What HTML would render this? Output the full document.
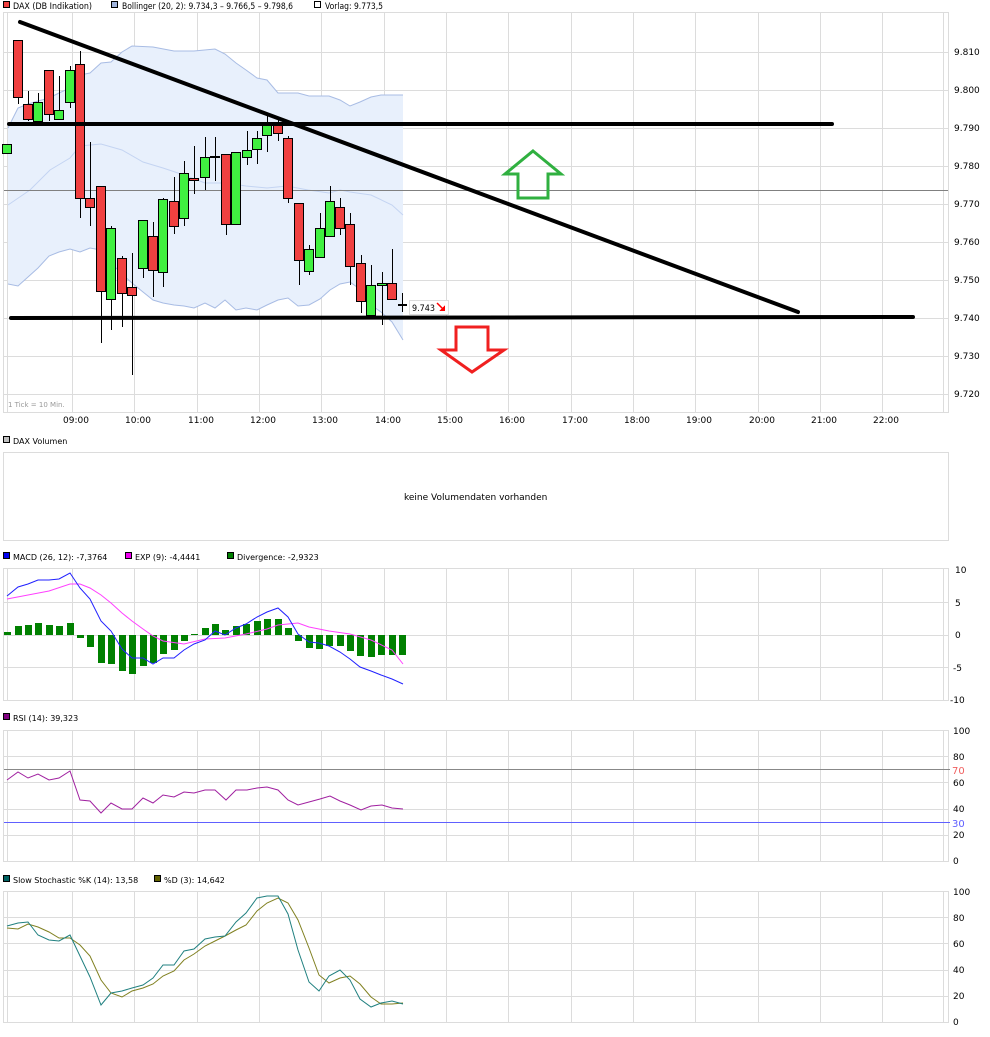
<!DOCTYPE html>
<html><head><meta charset="utf-8"><style>
body{margin:0;background:#fff;width:990px;height:1033px;overflow:hidden;font-family:"DejaVu Sans","Liberation Sans",sans-serif;}
svg text{font-family:"DejaVu Sans","Liberation Sans",sans-serif;font-size:9px;fill:#000;}
</style></head><body>
<svg width="990" height="1033" viewBox="0 0 990 1033" xmlns="http://www.w3.org/2000/svg" shape-rendering="crispEdges">
<!-- legend top -->
<rect x="3.5" y="1.5" width="6" height="6" fill="#f04040" stroke="#000"/>
<text x="13" y="9" textLength="79" lengthAdjust="spacingAndGlyphs">DAX (DB Indikation)</text>
<rect x="111.5" y="1.5" width="6" height="6" fill="#a0b4dc" stroke="#000"/>
<text x="122" y="9" textLength="171" lengthAdjust="spacingAndGlyphs">Bollinger (20, 2): 9.734,3 – 9.766,5 – 9.798,6</text>
<rect x="314.5" y="1.5" width="6" height="6" fill="#fff" stroke="#000"/>
<text x="325" y="9" textLength="58" lengthAdjust="spacingAndGlyphs">Vorlag: 9.773,5</text>

<!-- main panel -->
<g stroke="#dcdcdc" stroke-width="1">
<rect x="3.5" y="12.5" width="945" height="400" fill="none"/>
<line x1="7.5" y1="13" x2="7.5" y2="412"/><line x1="943.5" y1="13" x2="943.5" y2="412"/>
<line x1="72.5" y1="13" x2="72.5" y2="412"/><line x1="134.5" y1="13" x2="134.5" y2="412"/><line x1="197.5" y1="13" x2="197.5" y2="412"/><line x1="259.5" y1="13" x2="259.5" y2="412"/><line x1="321.5" y1="13" x2="321.5" y2="412"/><line x1="384.5" y1="13" x2="384.5" y2="412"/><line x1="446.5" y1="13" x2="446.5" y2="412"/><line x1="508.5" y1="13" x2="508.5" y2="412"/><line x1="571.5" y1="13" x2="571.5" y2="412"/><line x1="633.5" y1="13" x2="633.5" y2="412"/><line x1="695.5" y1="13" x2="695.5" y2="412"/><line x1="758.5" y1="13" x2="758.5" y2="412"/><line x1="820.5" y1="13" x2="820.5" y2="412"/><line x1="882.5" y1="13" x2="882.5" y2="412"/>
<line x1="4" y1="52.5" x2="948" y2="52.5"/><line x1="4" y1="90.5" x2="948" y2="90.5"/><line x1="4" y1="128.5" x2="948" y2="128.5"/><line x1="4" y1="166.5" x2="948" y2="166.5"/><line x1="4" y1="204.5" x2="948" y2="204.5"/><line x1="4" y1="242.5" x2="948" y2="242.5"/><line x1="4" y1="280.5" x2="948" y2="280.5"/><line x1="4" y1="318.5" x2="948" y2="318.5"/><line x1="4" y1="356.5" x2="948" y2="356.5"/><line x1="4" y1="394.5" x2="948" y2="394.5"/>
</g>
<g shape-rendering="auto">
<polygon fill="#e8f0fc" points="8,128 18,108 28,104 38,101 49,98 59,93 70,88 80,75 90,73 101,63 111,62 122,52 132,46 153,47 174,51 194,51 215,49 225,54 236,63 246,70 257,78 267,80 278,93 298,93 309,96 329,96 340,100 350,106 360,102 371,97 381,95 403,95 403,340 392,322 381,312 371,305 361,290 350,282 340,284 330,290 320,299 309,305 298,306 288,298 278,300 267,305 257,310 246,308 236,310 225,300 215,308 205,303 194,308 184,306 174,305 163,303 153,300 143,292 132,283 122,274 111,263 101,250 90,248 80,252 70,249 59,252 49,256 38,268 28,277 18,286 8,284"/>
<polyline fill="none" stroke="#a8bce4" points="8,128 18,108 28,104 38,101 49,98 59,93 70,88 80,75 90,73 101,63 111,62 122,52 132,46 153,47 174,51 194,51 215,49 225,54 236,63 246,70 257,78 267,80 278,93 298,93 309,96 329,96 340,100 350,106 360,102 371,97 381,95 403,95"/>
<polyline fill="none" stroke="#a8bce4" points="8,284 18,286 28,277 38,268 49,256 59,252 70,249 80,252 90,248 101,250 111,263 122,274 132,283 143,292 153,300 163,303 174,305 184,306 194,308 205,303 215,308 225,300 236,310 246,308 257,310 267,305 278,300 288,298 298,306 309,305 320,299 330,290 340,284 350,282 361,290 371,305 381,312 392,322 403,340"/>
<polyline fill="none" stroke="#c4d4f2" points="8,205 30,190 50,170 70,158 80,146 101,144 122,150 143,162 163,168 184,175 205,183 226,183 246,186 267,188 287,186 308,190 329,193 340,190 350,192 371,195 392,205 403,215"/>
</g>
<line x1="4" y1="190.5" x2="948" y2="190.5" stroke="#808080"/>

<!-- candles -->
<g stroke="#000" stroke-width="1">
<rect x="2.5" y="144.5" width="9" height="9" fill="#40f040"/>
<line x1="18.5" y1="97" x2="18.5" y2="104"/><rect x="13.5" y="40.5" width="9" height="57" fill="#f04040"/>
<line x1="28.5" y1="91" x2="28.5" y2="121"/><rect x="23.5" y="104.5" width="9" height="15" fill="#f04040"/>
<line x1="38.5" y1="93" x2="38.5" y2="121"/><rect x="33.5" y="102.5" width="9" height="19" fill="#40f040"/>
<line x1="49.5" y1="70" x2="49.5" y2="121"/><rect x="44.5" y="70.5" width="9" height="44" fill="#f04040"/>
<line x1="59.5" y1="76" x2="59.5" y2="119"/><rect x="54.5" y="110.5" width="9" height="9" fill="#40f040"/>
<line x1="70.5" y1="66" x2="70.5" y2="108"/><rect x="65.5" y="70.5" width="9" height="32" fill="#40f040"/>
<line x1="80.5" y1="51" x2="80.5" y2="218"/><rect x="75.5" y="64.5" width="9" height="134" fill="#f04040"/>
<line x1="90.5" y1="142" x2="90.5" y2="226"/><rect x="85.5" y="198.5" width="9" height="9" fill="#f04040"/>
<line x1="101.5" y1="186" x2="101.5" y2="343"/><rect x="96.5" y="186.5" width="9" height="105" fill="#f04040"/>
<line x1="111.5" y1="226" x2="111.5" y2="330"/><rect x="106.5" y="228.5" width="9" height="71" fill="#40f040"/>
<line x1="122.5" y1="256" x2="122.5" y2="327"/><rect x="117.5" y="258.5" width="9" height="35" fill="#f04040"/>
<line x1="132.5" y1="253" x2="132.5" y2="375"/><rect x="127.5" y="287.5" width="9" height="8" fill="#f04040"/>
<line x1="143.5" y1="220" x2="143.5" y2="278"/><rect x="138.5" y="220.5" width="9" height="48" fill="#40f040"/>
<line x1="153.5" y1="222" x2="153.5" y2="297"/><rect x="148.5" y="236.5" width="9" height="34" fill="#f04040"/>
<line x1="163.5" y1="198" x2="163.5" y2="287"/><rect x="158.5" y="199.5" width="9" height="73" fill="#40f040"/>
<line x1="174.5" y1="177" x2="174.5" y2="234"/><rect x="169.5" y="201.5" width="9" height="25" fill="#f04040"/>
<line x1="184.5" y1="161" x2="184.5" y2="226"/><rect x="179.5" y="173.5" width="9" height="45" fill="#40f040"/>
<line x1="194.5" y1="146" x2="194.5" y2="194"/><rect x="189.5" y="178.5" width="9" height="2" fill="#f04040"/>
<line x1="205.5" y1="137" x2="205.5" y2="190"/><rect x="200.5" y="157.5" width="9" height="20" fill="#40f040"/>
<line x1="215.5" y1="137" x2="215.5" y2="181"/><rect x="210.5" y="156.5" width="9" height="1" fill="#40f040"/>
<line x1="226.5" y1="154" x2="226.5" y2="235"/><rect x="221.5" y="154.5" width="9" height="70" fill="#f04040"/>
<line x1="236.5" y1="152" x2="236.5" y2="224"/><rect x="231.5" y="152.5" width="9" height="72" fill="#40f040"/>
<line x1="247.5" y1="131" x2="247.5" y2="165"/><rect x="242.5" y="150.5" width="9" height="7" fill="#40f040"/>
<line x1="257.5" y1="131" x2="257.5" y2="164"/><rect x="252.5" y="138.5" width="9" height="11" fill="#40f040"/>
<line x1="267.5" y1="113" x2="267.5" y2="152"/><rect x="262.5" y="124.5" width="9" height="11" fill="#40f040"/>
<line x1="278.5" y1="118" x2="278.5" y2="141"/><rect x="273.5" y="124.5" width="9" height="9" fill="#f04040"/>
<line x1="288.5" y1="136" x2="288.5" y2="203"/><rect x="283.5" y="138.5" width="9" height="60" fill="#f04040"/>
<line x1="299.5" y1="203" x2="299.5" y2="285"/><rect x="294.5" y="203.5" width="9" height="57" fill="#f04040"/>
<line x1="309.5" y1="245" x2="309.5" y2="275"/><rect x="304.5" y="249.5" width="9" height="22" fill="#40f040"/>
<line x1="320.5" y1="213" x2="320.5" y2="257"/><rect x="315.5" y="228.5" width="9" height="29" fill="#40f040"/>
<line x1="330.5" y1="186" x2="330.5" y2="236"/><rect x="325.5" y="201.5" width="9" height="35" fill="#40f040"/>
<line x1="340.5" y1="198" x2="340.5" y2="235"/><rect x="335.5" y="207.5" width="9" height="21" fill="#f04040"/>
<line x1="350.5" y1="213" x2="350.5" y2="285"/><rect x="345.5" y="224.5" width="9" height="42" fill="#f04040"/>
<line x1="361.5" y1="255" x2="361.5" y2="313"/><rect x="356.5" y="263.5" width="9" height="38" fill="#f04040"/>
<line x1="371.5" y1="265" x2="371.5" y2="318"/><rect x="366.5" y="285.5" width="9" height="30" fill="#40f040"/>
<line x1="382.5" y1="272" x2="382.5" y2="325"/><rect x="377.5" y="283.5" width="9" height="2" fill="#40f040"/>
<line x1="392.5" y1="249" x2="392.5" y2="299"/><rect x="387.5" y="283.5" width="9" height="16" fill="#f04040"/>
<line x1="402.5" y1="293" x2="402.5" y2="312"/><rect x="398.5" y="304.5" width="8" height="1" fill="#f04040"/>
</g>
<rect x="409.5" y="300.5" width="39" height="14" fill="#fff" stroke="#ddd"/>
<text x="412" y="311" textLength="23" lengthAdjust="spacingAndGlyphs">9.743</text>
<path d="M437,303 L444,310" stroke="#f00" stroke-width="1.5" fill="none" shape-rendering="auto"/>
<polygon points="445,311 439,311 445,305" fill="#f00"/>

<!-- trend lines -->
<g stroke="#000" stroke-width="4" shape-rendering="auto" stroke-linecap="round">
<line x1="20" y1="22" x2="798" y2="312"/>
<line x1="9" y1="124" x2="832" y2="124"/>
<line x1="11" y1="318" x2="913" y2="317"/>
</g>
<polygon points="533,151 561,174 548,174 548,198 518,198 518,174 505,174" fill="none" stroke="#30b040" stroke-width="3" shape-rendering="auto"/>
<polygon points="456,327 488,327 488,350 504,350 472,372 441,350 456,350" fill="none" stroke="#f02020" stroke-width="3" shape-rendering="auto"/>

<g font-size="8">
<text x="954" y="55">9.810</text><text x="954" y="93">9.800</text><text x="954" y="131">9.790</text><text x="954" y="169">9.780</text><text x="954" y="207">9.770</text><text x="954" y="245">9.760</text><text x="954" y="283">9.750</text><text x="954" y="321">9.740</text><text x="954" y="359">9.730</text><text x="954" y="397">9.720</text>
</g>
<text x="8" y="407" style="font-size:7px;fill:#999">1 Tick = 10 Min.</text>
<g style="font-size:8px">
<text x="63" y="423">09:00</text><text x="125" y="423">10:00</text><text x="188" y="423">11:00</text><text x="250" y="423">12:00</text><text x="312" y="423">13:00</text><text x="375" y="423">14:00</text><text x="437" y="423">15:00</text><text x="499" y="423">16:00</text><text x="562" y="423">17:00</text><text x="624" y="423">18:00</text><text x="686" y="423">19:00</text><text x="749" y="423">20:00</text><text x="811" y="423">21:00</text><text x="873" y="423">22:00</text>
</g>

<!-- volume -->
<rect x="3.5" y="436.5" width="6" height="6" fill="#c0c0c0" stroke="#000"/>
<text x="13" y="444" style="font-size:8px">DAX Volumen</text>
<rect x="3.5" y="452.5" width="945" height="88" fill="none" stroke="#dcdcdc"/>
<text x="404" y="500">keine Volumendaten vorhanden</text>

<!-- MACD -->
<rect x="3.5" y="552.5" width="6" height="6" fill="#0000f0" stroke="#000"/>
<text x="13" y="560" style="font-size:8px">MACD (26, 12): -7,3764</text>
<rect x="125.5" y="552.5" width="6" height="6" fill="#f000f0" stroke="#000"/>
<text x="135" y="560" style="font-size:8px">EXP (9): -4,4441</text>
<rect x="227.5" y="552.5" width="6" height="6" fill="#008000" stroke="#000"/>
<text x="237" y="560" style="font-size:8px">Divergence: -2,9323</text>
<g stroke="#dcdcdc">
<rect x="3.5" y="568.5" width="945" height="132" fill="none"/>
<line x1="7.5" y1="569" x2="7.5" y2="700"/><line x1="943.5" y1="569" x2="943.5" y2="700"/>
<line x1="72.5" y1="569" x2="72.5" y2="700"/><line x1="134.5" y1="569" x2="134.5" y2="700"/><line x1="197.5" y1="569" x2="197.5" y2="700"/><line x1="259.5" y1="569" x2="259.5" y2="700"/><line x1="321.5" y1="569" x2="321.5" y2="700"/><line x1="384.5" y1="569" x2="384.5" y2="700"/><line x1="446.5" y1="569" x2="446.5" y2="700"/><line x1="508.5" y1="569" x2="508.5" y2="700"/><line x1="571.5" y1="569" x2="571.5" y2="700"/><line x1="633.5" y1="569" x2="633.5" y2="700"/><line x1="695.5" y1="569" x2="695.5" y2="700"/><line x1="758.5" y1="569" x2="758.5" y2="700"/><line x1="820.5" y1="569" x2="820.5" y2="700"/><line x1="882.5" y1="569" x2="882.5" y2="700"/>
<line x1="4" y1="602.5" x2="948" y2="602.5"/><line x1="4" y1="635.5" x2="948" y2="635.5"/><line x1="4" y1="667.5" x2="948" y2="667.5"/>
</g>
<g fill="#008000">
<rect x="4" y="632" width="7" height="3"/><rect x="15" y="626" width="7" height="9"/><rect x="25" y="625" width="7" height="10"/><rect x="35" y="623" width="7" height="12"/><rect x="46" y="625" width="7" height="10"/><rect x="56" y="626" width="7" height="9"/><rect x="67" y="623" width="7" height="12"/><rect x="77" y="635" width="7" height="3"/><rect x="87" y="635" width="7" height="12"/><rect x="98" y="635" width="7" height="28"/><rect x="108" y="635" width="7" height="29"/><rect x="119" y="635" width="7" height="36"/><rect x="129" y="635" width="7" height="39"/><rect x="140" y="635" width="7" height="31"/><rect x="150" y="635" width="7" height="28"/><rect x="160" y="635" width="7" height="19"/><rect x="171" y="635" width="7" height="15"/><rect x="181" y="635" width="7" height="6"/><rect x="191" y="634" width="7" height="1"/><rect x="202" y="628" width="7" height="7"/><rect x="212" y="624" width="7" height="11"/><rect x="222" y="630" width="7" height="5"/><rect x="233" y="626" width="7" height="9"/><rect x="243" y="624" width="7" height="11"/><rect x="254" y="621" width="7" height="14"/><rect x="264" y="619" width="7" height="16"/><rect x="275" y="619" width="7" height="16"/><rect x="285" y="628" width="7" height="7"/><rect x="295" y="635" width="7" height="6"/><rect x="306" y="635" width="7" height="13"/><rect x="316" y="635" width="7" height="14"/><rect x="326" y="635" width="7" height="11"/><rect x="337" y="635" width="7" height="11"/><rect x="347" y="635" width="7" height="16"/><rect x="357" y="635" width="7" height="21"/><rect x="368" y="635" width="7" height="22"/><rect x="378" y="635" width="7" height="20"/><rect x="389" y="635" width="7" height="20"/><rect x="399" y="635" width="7" height="20"/>
</g>
<g fill="none" shape-rendering="auto">
<polyline stroke="#ff40ff" points="7,599 28,595 49,591 70,584 80,584 90,588 101,595 111,603 122,613 132,621 143,629 153,636 163,641 184,644 205,639 225,638 246,634 267,629 278,625 298,623 309,627 329,631 350,634 371,640 392,650 403,664"/>
<polyline stroke="#2020ff" points="7,596 18,587 28,584 38,580 49,580 59,579 70,573 80,588 90,599 101,621 111,631 122,649 132,658 143,658 153,664 163,658 174,658 184,650 194,644 205,640 215,631 225,635 236,628 246,624 257,617 267,612 278,608 288,617 298,634 309,642 319,643 329,646 340,652 350,659 360,667 371,671 381,675 392,679 403,684"/>
</g>
<g style="font-size:8px"><text x="955" y="573">10</text><text x="955" y="606">5</text><text x="955" y="638">0</text><text x="953" y="671">-5</text><text x="950" y="703">-10</text></g>

<!-- RSI -->
<rect x="3.5" y="713.5" width="6" height="6" fill="#800080" stroke="#000"/>
<text x="13" y="721" style="font-size:8px">RSI (14): 39,323</text>
<g stroke="#dcdcdc">
<rect x="3.5" y="730.5" width="945" height="131" fill="none"/>
<line x1="7.5" y1="731" x2="7.5" y2="861"/><line x1="943.5" y1="731" x2="943.5" y2="861"/>
<line x1="72.5" y1="731" x2="72.5" y2="861"/><line x1="134.5" y1="731" x2="134.5" y2="861"/><line x1="197.5" y1="731" x2="197.5" y2="861"/><line x1="259.5" y1="731" x2="259.5" y2="861"/><line x1="321.5" y1="731" x2="321.5" y2="861"/><line x1="384.5" y1="731" x2="384.5" y2="861"/><line x1="446.5" y1="731" x2="446.5" y2="861"/><line x1="508.5" y1="731" x2="508.5" y2="861"/><line x1="571.5" y1="731" x2="571.5" y2="861"/><line x1="633.5" y1="731" x2="633.5" y2="861"/><line x1="695.5" y1="731" x2="695.5" y2="861"/><line x1="758.5" y1="731" x2="758.5" y2="861"/><line x1="820.5" y1="731" x2="820.5" y2="861"/><line x1="882.5" y1="731" x2="882.5" y2="861"/>
<line x1="4" y1="756.5" x2="948" y2="756.5"/><line x1="4" y1="782.5" x2="948" y2="782.5"/><line x1="4" y1="809.5" x2="948" y2="809.5"/><line x1="4" y1="835.5" x2="948" y2="835.5"/>
</g>
<line x1="4" y1="769.5" x2="950" y2="769.5" stroke="#888"/>
<line x1="4" y1="822.5" x2="950" y2="822.5" stroke="#6060ff"/>
<polyline fill="none" stroke="#a020a0" shape-rendering="auto" points="7,780 18,772 28,778 38,774 49,780 59,778 70,771 80,800 90,801 101,813 111,803 122,809 132,809 143,798 153,803 163,795 174,797 184,792 194,793 205,790 215,790 226,800 236,790 247,790 257,788 267,787 278,790 288,800 298,805 309,802 320,799 330,796 340,801 350,805 361,810 371,806 382,805 392,808 403,809"/>
<g style="font-size:8px"><text x="953" y="734">100</text><text x="953" y="760">80</text><text x="953" y="786">60</text><text x="953" y="812">40</text><text x="953" y="838">20</text><text x="953" y="864">0</text></g>
<text x="952" y="774" style="font-size:10px;fill:#f06060">70</text>
<text x="952" y="827" style="font-size:10px;fill:#6060ff">30</text>

<!-- Stochastic -->
<rect x="3.5" y="875.5" width="6" height="6" fill="#006060" stroke="#000"/>
<text x="13" y="883" style="font-size:8px">Slow Stochastic %K (14): 13,58</text>
<rect x="154.5" y="875.5" width="6" height="6" fill="#606000" stroke="#000"/>
<text x="164" y="883" style="font-size:8px">%D (3): 14,642</text>
<g stroke="#dcdcdc">
<rect x="3.5" y="891.5" width="945" height="131" fill="none"/>
<line x1="7.5" y1="892" x2="7.5" y2="1022"/><line x1="943.5" y1="892" x2="943.5" y2="1022"/>
<line x1="72.5" y1="892" x2="72.5" y2="1022"/><line x1="134.5" y1="892" x2="134.5" y2="1022"/><line x1="197.5" y1="892" x2="197.5" y2="1022"/><line x1="259.5" y1="892" x2="259.5" y2="1022"/><line x1="321.5" y1="892" x2="321.5" y2="1022"/><line x1="384.5" y1="892" x2="384.5" y2="1022"/><line x1="446.5" y1="892" x2="446.5" y2="1022"/><line x1="508.5" y1="892" x2="508.5" y2="1022"/><line x1="571.5" y1="892" x2="571.5" y2="1022"/><line x1="633.5" y1="892" x2="633.5" y2="1022"/><line x1="695.5" y1="892" x2="695.5" y2="1022"/><line x1="758.5" y1="892" x2="758.5" y2="1022"/><line x1="820.5" y1="892" x2="820.5" y2="1022"/><line x1="882.5" y1="892" x2="882.5" y2="1022"/>
<line x1="4" y1="917.5" x2="948" y2="917.5"/><line x1="4" y1="943.5" x2="948" y2="943.5"/><line x1="4" y1="970.5" x2="948" y2="970.5"/><line x1="4" y1="996.5" x2="948" y2="996.5"/>
</g>
<g fill="none" shape-rendering="auto">
<polyline stroke="#808020" points="7,928 18,929 28,924 38,927 49,932 59,938 70,938 80,945 90,956 101,980 111,993 122,997 132,991 143,988 153,984 163,976 174,971 184,960 194,954 205,946 215,941 225,936 236,930 246,925 257,911 267,903 278,898 288,903 298,920 309,948 319,975 329,983 340,978 350,976 360,984 371,997 381,1004 392,1004 403,1003"/>
<polyline stroke="#208080" points="7,926 18,923 28,922 38,935 49,940 59,941 70,935 80,956 90,977 101,1005 111,993 122,991 132,988 143,985 153,978 163,965 174,965 184,951 194,949 205,939 215,937 225,936 236,922 246,913 257,898 267,896 278,896 288,914 298,950 309,982 319,991 329,976 340,970 350,980 360,999 371,1007 381,1003 392,1001 403,1004"/>
</g>
<g style="font-size:8px"><text x="953" y="895">100</text><text x="953" y="921">80</text><text x="953" y="947">60</text><text x="953" y="973">40</text><text x="953" y="999">20</text><text x="953" y="1025">0</text></g>
</svg>
</body></html>
